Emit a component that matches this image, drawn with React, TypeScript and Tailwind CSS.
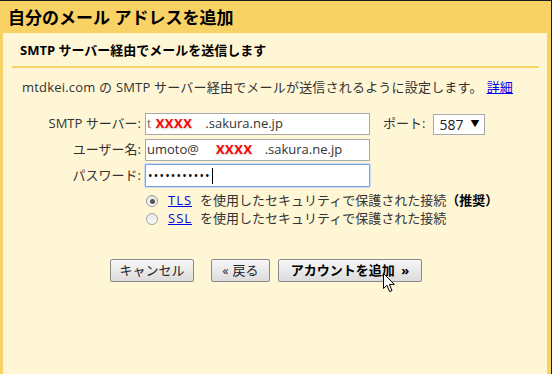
import React from 'react';

const jp = "font-['Open_Sans','Noto_Sans_CJK_JP',sans-serif]";

// 赤い伏せ字(ぼかし付き)
const Redact: React.FC<{ className?: string }> = ({ className = '' }) => (
  <span
    className={`inline-block px-[3px] bg-white text-[#ff0000] font-bold tracking-[0.5px] shadow-[0_0_4px_3px_#ffffff] [text-shadow:0_1px_2px_rgba(0,0,0,0.25)] ${className}`}
  >
    XXXX
  </span>
);

const Btn: React.FC<{ children: React.ReactNode; className?: string }> = ({ children, className = '' }) => (
  <button
    className={`h-[23px] border border-[#8a8a8a] rounded-[2px] bg-gradient-to-b from-[#f7f7f7] to-[#dcdcdc] text-[13px] text-[#222] leading-none ${className}`}
  >
    {children}
  </button>
);

export default function App() {
  return (
    <div className={`w-[552px] h-[374px] flex flex-col bg-[#f9d266] border-t border-r border-[#1a1a1a] text-[#222] ${jp}`}>
      {/* タイトル */}
      <div className="h-[32px] shrink-0 flex items-center pl-2">
        <h1 className="text-[17px] font-bold text-black leading-none">自分のメール アドレスを追加</h1>
      </div>

      <div className="flex-1 ml-[3px] mr-[4px] bg-[#fff6d6] flex flex-col">
        <h2 className="pl-[17px] pt-[7px] text-[13px] font-bold text-black leading-[20px]">
          SMTP サーバー経由でメールを送信します
        </h2>
        <div className="ml-[9px] mr-[8px] mt-[6px] h-[2px] bg-[#f9d266]" />

        <p className="pl-[19px] mt-[11px] text-[13px] leading-[16px] text-[#333] tracking-[0.2px]">
          mtdkei.com の SMTP サーバー経由でメールが送信されるように設定します。
          <a href="#" className="text-[#0000ee] underline ml-[4px]">詳細</a>
        </p>

        {/* フォーム */}
        <div className="mt-[18px] flex flex-col text-[13px]">
          <div className="flex items-center">
            <label className="w-[139px] text-right pr-[1px] text-[#333]">SMTP サーバー:</label>
            <div className="ml-[3px] w-[225px] h-[22px] border border-[#a9a9a9] bg-white flex items-center pl-[1px] text-[#333] overflow-hidden whitespace-nowrap">
              <span>t</span>
              <Redact className="ml-[1px]" />
              <span className="ml-[10px]">.sakura.ne.jp</span>
            </div>
            <label className="ml-[13px] text-[#333]">ポート:</label>
            <div className="ml-[8px] w-[52px] h-[21px] border border-[#a9a9a9] bg-white flex items-center justify-between pl-[5px] pr-[5px] text-[14px]">
              <span>587</span>
              <span className="text-[9px] text-black">▼</span>
            </div>
          </div>

          <div className="flex items-center mt-[4px]">
            <label className="w-[139px] text-right pr-[1px] text-[#333]">ユーザー名:</label>
            <div className="ml-[3px] w-[225px] h-[22px] border border-[#a9a9a9] bg-white flex items-center pl-[1px] text-[#333] overflow-hidden whitespace-nowrap">
              <span>umoto@</span>
              <Redact className="ml-[14px]" />
              <span className="ml-[9px]">.sakura.ne.jp</span>
            </div>
          </div>

          <div className="flex items-center mt-[3px]">
            <label className="w-[139px] text-right pr-[1px] text-[#333]">パスワード:</label>
            <div className="ml-[3px] w-[225px] h-[23px] border border-[#7aa3de] rounded-[1px] bg-white flex items-center pl-[2px] shadow-[0_0_0_1px_#cddcf3]">
              <span className="text-[12px] tracking-[1.2px] text-black leading-none">•••••••••••</span>
              <span className="ml-[1px] w-[1px] h-[16px] bg-black" />
            </div>
          </div>
        </div>

        {/* 接続方式 */}
        <div className="mt-[6px] ml-[143px] flex flex-col gap-[2px] text-[13px] text-[#333]">
          <label className="flex items-center h-[16px]">
            <span className="w-[12px] h-[12px] rounded-full border border-[#9a9a9a] bg-gradient-to-b from-[#e6e6e6] to-[#fafafa] flex items-center justify-center">
              <span className="w-[5px] h-[5px] rounded-full bg-[#555]" />
            </span>
            <a href="#" className="ml-[10px] text-[#0000ee] underline tracking-[1px]">TLS</a>
            <span className="ml-[8px]">を使用したセキュリティで保護された接続</span>
            <span className="font-bold text-black">（推奨）</span>
          </label>
          <label className="flex items-center h-[16px]">
            <span className="w-[12px] h-[12px] rounded-full border border-[#a5a5a5] bg-gradient-to-b from-[#e6e6e6] to-[#fafafa]" />
            <a href="#" className="ml-[10px] text-[#0000ee] underline tracking-[1px]">SSL</a>
            <span className="ml-[8px]">を使用したセキュリティで保護された接続</span>
          </label>
        </div>

        {/* ボタン */}
        <div className="relative mt-[32px] ml-[107px] flex items-center">
          <Btn className="w-[84px]">キャンセル</Btn>
          <Btn className="ml-[17px] w-[59px]">
            <span className="text-[12px] mr-[4px]">«</span>戻る
          </Btn>
          <Btn className="ml-[8px] w-[144px] font-bold text-black border-[#6b6b6b]">
            アカウントを追加 <span className="ml-[3px]">»</span>
          </Btn>
          {/* マウスカーソル */}
          <svg
            className="absolute left-[273px] top-[14px]"
            width="13"
            height="20"
            viewBox="0 0 13 20"
          >
            <path
              d="M0.5 0.5 L0.5 15.5 L4 12.2 L6.6 18.6 L9 17.6 L6.4 11.4 L11.3 11.4 Z"
              fill="#fff"
              stroke="#000"
              strokeWidth="1"
              strokeLinejoin="miter"
            />
          </svg>
        </div>
      </div>
    </div>
  );
}
